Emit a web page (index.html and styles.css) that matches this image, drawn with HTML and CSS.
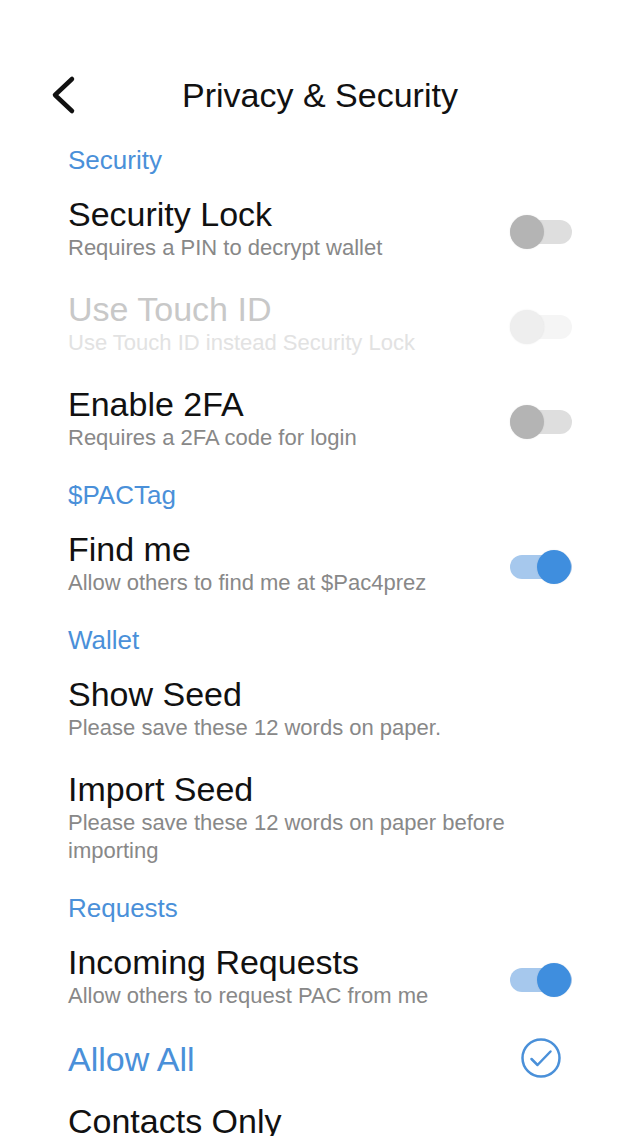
FILE: index.html
```html
<!DOCTYPE html>
<html lang="en">
<head>
  <meta charset="UTF-8">
  <meta name="viewport" content="width=device-width, initial-scale=1.0">
  <title>Privacy &amp; Security</title>
  <link rel="stylesheet" href="styles.css">
</head>
<body>
  <div id="page">
    <div class="navbar">
      <a class="back" href="#">
        <svg width="30" height="42" viewBox="0 0 30 42">
          <path d="M24 5 L7 21 L24 37" fill="none" stroke="#111" stroke-width="4.5" stroke-linecap="round" stroke-linejoin="round"/>
        </svg>
      </a>
      <h1 class="title">Privacy &amp; Security</h1>
      <div></div>
    </div>

    <div class="content">
      <div class="section">
        <div class="section-header">Security</div>
        <div class="row">
          <div class="row-text">
            <div class="row-title">Security Lock</div>
            <div class="row-sub">Requires a PIN to decrypt wallet</div>
          </div>
          <div class="toggle"></div>
        </div>
        <div class="row disabled">
          <div class="row-text">
            <div class="row-title">Use Touch ID</div>
            <div class="row-sub">Use Touch ID instead Security Lock</div>
          </div>
          <div class="toggle"></div>
        </div>
        <div class="row">
          <div class="row-text">
            <div class="row-title">Enable 2FA</div>
            <div class="row-sub">Requires a 2FA code for login</div>
          </div>
          <div class="toggle"></div>
        </div>
      </div>

      <div class="section">
        <div class="section-header">$PACTag</div>
        <div class="row">
          <div class="row-text">
            <div class="row-title">Find me</div>
            <div class="row-sub">Allow others to find me at $Pac4prez</div>
          </div>
          <div class="toggle on"></div>
        </div>
      </div>

      <div class="section">
        <div class="section-header">Wallet</div>
        <div class="row">
          <div class="row-text">
            <div class="row-title">Show Seed</div>
            <div class="row-sub">Please save these 12 words on paper.</div>
          </div>
        </div>
        <div class="row">
          <div class="row-text wide">
            <div class="row-title">Import Seed</div>
            <div class="row-sub">Please save these 12 words on paper before importing</div>
          </div>
        </div>
      </div>

      <div class="section">
        <div class="section-header">Requests</div>
        <div class="row">
          <div class="row-text">
            <div class="row-title">Incoming Requests</div>
            <div class="row-sub">Allow others to request PAC from me</div>
          </div>
          <div class="toggle on"></div>
        </div>
        <div class="options">
          <div class="option selected">
            <span>Allow All</span>
            <svg class="check" width="40" height="40" viewBox="0 0 40 40">
              <circle cx="20" cy="20" r="18.5" fill="none" stroke="#4a90d9" stroke-width="2.5"/>
              <path d="M10.5 21 L16.5 27 L29.5 13.5" fill="none" stroke="#4a90d9" stroke-width="2.5" stroke-linecap="round" stroke-linejoin="round"/>
            </svg>
          </div>
          <div class="option">
            <span>Contacts Only</span>
          </div>
        </div>
      </div>
    </div>
  </div>
</body>
</html>
```

FILE: styles.css
```css
body {
  margin: 0;
  background: #fff;
  font-family: "Liberation Sans", Arial, sans-serif;
  color: #111;
  overflow: hidden;
}

#page {
  height: 1136px;
  padding-top: 60px;
  box-sizing: border-box;
}

.navbar {
  display: grid;
  grid-template-columns: 1fr auto 1fr;
  align-items: center;
  height: 70px;
}

.back {
  display: flex;
  padding-left: 48px;
}

.title {
  margin: 0;
  font-size: 34px;
  font-weight: normal;
  line-height: 40px;
}

.content {
  padding-top: 14px;
}

.section {
  padding: 0 68px;
}

.section-header {
  font-size: 26px;
  line-height: 32px;
  color: #4a90d9;
  margin-bottom: 18px;
}

.row {
  display: flex;
  justify-content: space-between;
  align-items: center;
  margin-bottom: 27px;
}

.row-text.wide {
  max-width: 460px;
}

.row-title {
  font-size: 34px;
  line-height: 40px;
}

.row-sub {
  font-size: 22px;
  line-height: 28px;
  color: #888;
}

.row.disabled .row-title {
  color: #c8c8c8;
}

.row.disabled .row-sub {
  color: #e2e2e2;
}

/* switch */
.toggle {
  position: relative;
  flex: none;
  width: 62px;
  height: 24px;
  margin-top: 8px;
  border-radius: 12px;
  background: #dedede;
}

.toggle::after {
  content: "";
  position: absolute;
  top: -5px;
  left: 0;
  width: 34px;
  height: 34px;
  border-radius: 50%;
  background: #b4b4b4;
  box-shadow: 0 0 2px rgba(0, 0, 0, 0.08);
}

.toggle.on {
  background: #a6c8ed;
}

.toggle.on::after {
  left: 27px;
  background: #3f8ede;
}

.row.disabled .toggle {
  background: #f5f5f5;
}

.row.disabled .toggle::after {
  background: #eeeeee;
}

.options {
  margin-top: -9px;
}

.option {
  display: flex;
  justify-content: space-between;
  align-items: center;
  height: 62px;
  font-size: 34px;
}

.option.selected {
  color: #4a90d9;
}

.check {
  margin-right: 11px;
  margin-top: -2px;
}
```
